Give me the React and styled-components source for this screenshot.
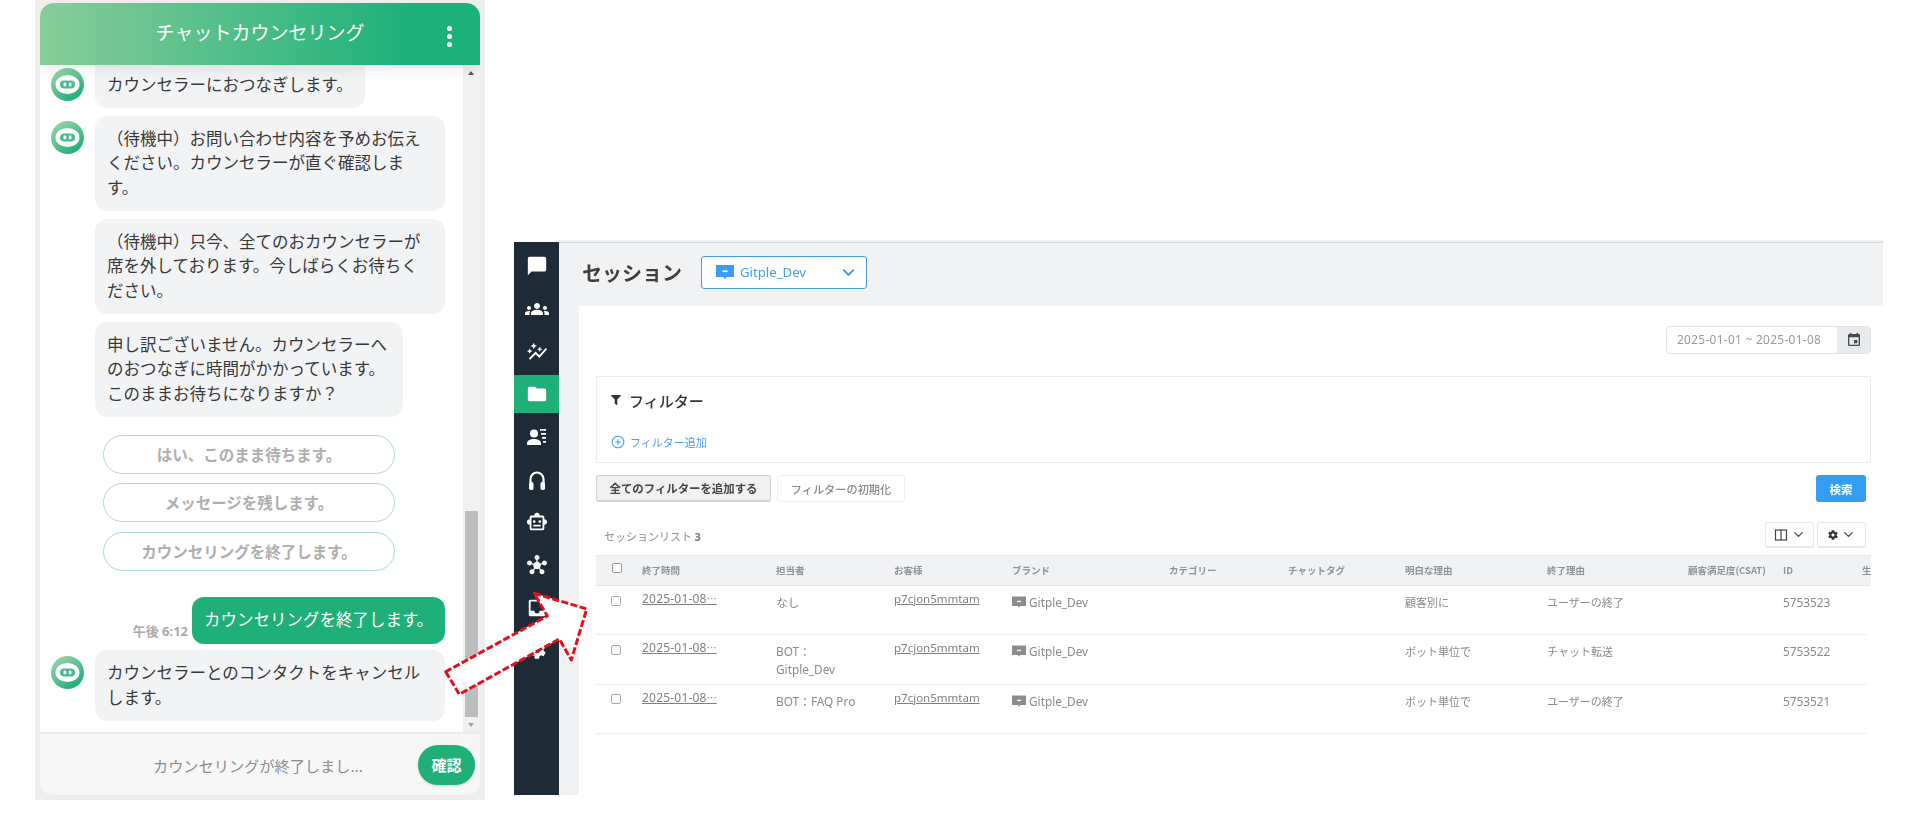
import styled, { createGlobalStyle } from "styled-components";
import { ChevronDown, CirclePlus } from "lucide-react";
import {
  MdAutoGraph,
  MdChatBubble,
  MdEvent,
  MdFolder,
  MdGroups,
  MdHub,
  MdInbox,
  MdOutlineSmartToy,
  MdSettings,
} from "react-icons/md";
import { FaCog, FaFilter } from "react-icons/fa";

const JP = `"Noto Sans CJK JP", "Noto Sans", sans-serif`;
const LATIN = `"Noto Sans", "Noto Sans CJK JP", sans-serif`;

const GlobalStyle = createGlobalStyle`
  * { box-sizing: border-box; }
  body { margin: 0; background: #fff; font-family: ${JP}; }
`;

const ContactListIcon = () => (
  <svg width="22" height="22" viewBox="0 0 22 22" fill="#fff">
    <circle cx="8" cy="7.500" r="4" />
    <path d="M1 19v-2c0-2.600 4-4 7-4s7 1.400 7 4v2z" />
    <path d="M14 3h6v1.700h-6zM15 7h5v1.700h-5zM16 11h4v1.700h-4zM17 15h3v1.700h-3z" />
  </svg>
);

const HeadsetIcon = () => (
  <svg width="24" height="24" viewBox="0 0 24 24" fill="#fff">
    <path d="M5.500 15v-4a6.500 6.500 0 0 1 13 0v4" fill="none" stroke="#fff" strokeWidth="2.200" />
    <rect x="4" y="14" width="4.500" height="8" rx="1.800" />
    <rect x="15.500" y="14" width="4.500" height="8" rx="1.800" />
  </svg>
);

const ColumnsIcon = () => (
  <svg width="14" height="14" viewBox="0 0 14 14" fill="none" stroke="#444" strokeWidth="1.200">
    <rect x="1.500" y="2" width="11" height="10" />
    <path d="M7 2v10" />
  </svg>
);

const BrandIcon = ({ color, size = 14 }) => (
  <svg width={size} height={size} viewBox="0 0 18 16">
    <path d="M0 1h18v12h-7.500L9 15.500 7.500 13H0z" fill={color} />
    <rect x="6.500" y="6.500" width="5" height="1.600" fill="#fff" />
  </svg>
);

const BotAvatar = ({ first }) => (
  <AvatarBox $first={first}>
    <svg width="33" height="33" viewBox="0 0 33 33">
      <defs>
        <linearGradient id="botGrad" x1="0" y1="0" x2="0.7" y2="1">
          <stop offset="0" stopColor="#a8d9ae" />
          <stop offset="1" stopColor="#1cae79" />
        </linearGradient>
      </defs>
      <circle cx="16.500" cy="16.500" r="16.500" fill="url(#botGrad)" />
      <ellipse cx="16.500" cy="16.500" rx="12" ry="9.500" fill="#fff" />
      <rect x="9" y="12.500" width="15" height="8" rx="4" fill="#4cbb8d" />
      <rect x="12.500" y="14.500" width="2.800" height="4" rx="1.400" fill="#fff" />
      <rect x="17.700" y="14.500" width="2.800" height="4" rx="1.400" fill="#fff" />
    </svg>
  </AvatarBox>
);

const NAV_ITEMS = [
  { icon: <MdChatBubble size={22} /> },
  { icon: <MdGroups size={24} /> },
  { icon: <MdAutoGraph size={22} /> },
  { icon: <MdFolder size={22} />, active: true },
  { icon: <ContactListIcon /> },
  { icon: <HeadsetIcon /> },
  { icon: <MdOutlineSmartToy size={22} /> },
  { icon: <MdHub size={20} /> },
  { icon: <MdInbox size={22} /> },
  { icon: <MdSettings size={22} /> },
];

const COLUMNS = [
  { label: "", width: 46 },
  { label: "終了時間", width: 134 },
  { label: "担当者", width: 118 },
  { label: "お客様", width: 118 },
  { label: "ブランド", width: 157 },
  { label: "カテゴリー", width: 119 },
  { label: "チャットタグ", width: 117 },
  { label: "明白な理由", width: 142 },
  { label: "終了理由", width: 141 },
  { label: "顧客満足度(CSAT)", width: 95 },
  { label: "ID", width: 79 },
  { label: "生", width: 120 },
];

const GRID = COLUMNS.map((c) => `${c.width}px`).join(" ");

const SESSIONS = [
  { agent: "なし", reason: "顧客別に", end: "ユーザーの終了", id: "5753523" },
  {
    agent: (
      <>
        BOT：
        <br />
        Gitple_Dev
      </>
    ),
    reason: "ボット単位で",
    end: "チャット転送",
    id: "5753522",
  },
  { agent: "BOT：FAQ Pro", reason: "ボット単位で", end: "ユーザーの終了", id: "5753521" },
];

const ChatWidget = () => (
  <S.ChatFrame>
    <S.Chat>
      <S.ChatHeader>
        <S.ChatTitle>チャットカウンセリング</S.ChatTitle>
        <S.Kebab>
          <i />
          <i />
          <i />
        </S.Kebab>
      </S.ChatHeader>
      <S.ChatBody>
        <S.Messages>
          <S.BotRow>
            <BotAvatar first />
            <S.Bubble $width={270} $clipped>
              カウンセラーにおつなぎします。
            </S.Bubble>
          </S.BotRow>
          <S.BotRow>
            <BotAvatar />
            <S.Bubble>（待機中）お問い合わせ内容を予めお伝えください。カウンセラーが直ぐ確認します。</S.Bubble>
          </S.BotRow>
          <S.BotRow $plain>
            <S.Bubble>（待機中）只今、全てのおカウンセラーが席を外しております。今しばらくお待ちください。</S.Bubble>
          </S.BotRow>
          <S.BotRow $plain>
            <S.Bubble $width={308}>申し訳ございません。カウンセラーへのおつなぎに時間がかかっています。このままお待ちになりますか？</S.Bubble>
          </S.BotRow>
          <S.Choices>
            <S.Choice>はい、このまま待ちます。</S.Choice>
            <S.Choice>メッセージを残します。</S.Choice>
            <S.Choice>カウンセリングを終了します。</S.Choice>
          </S.Choices>
          <S.UserRow>
            <S.Time>午後 6:12</S.Time>
            <S.UserBubble>カウンセリングを終了します。</S.UserBubble>
          </S.UserRow>
          <S.BotRow>
            <BotAvatar />
            <S.Bubble>カウンセラーとのコンタクトをキャンセルします。</S.Bubble>
          </S.BotRow>
        </S.Messages>
        <S.Scrollbar>
          <S.ScrollArrow $up />
          <S.ScrollSpace />
          <S.ScrollThumb />
          <S.ScrollArrow />
        </S.Scrollbar>
      </S.ChatBody>
      <S.ChatFooter>
        <S.ChatInput readOnly placeholder="カウンセリングが終了しまし..." />
        <S.ConfirmButton>確認</S.ConfirmButton>
      </S.ChatFooter>
    </S.Chat>
  </S.ChatFrame>
);

const SessionTable = () => (
  <S.Table>
    <S.TableHead>
      {COLUMNS.map((col, i) => (
        <S.HeadCell key={i}>
          {i === 0 ? <S.HeadCheck /> : <S.HeadLabel>{col.label}</S.HeadLabel>}
        </S.HeadCell>
      ))}
    </S.TableHead>
    {SESSIONS.map((row) => (
      <S.TableRow key={row.id}>
        <S.Cell>
          <S.RowCheck />
        </S.Cell>
        <S.LinkCell $spaced>
          2025-01-08<S.Dots>…</S.Dots>
        </S.LinkCell>
        <S.Cell $latin>{row.agent}</S.Cell>
        <S.LinkCell>p7cjon5mmtam</S.LinkCell>
        <S.Cell $latin>
          <S.Brand>
            <BrandIcon color="#8c8c8c" />
            Gitple_Dev
          </S.Brand>
        </S.Cell>
        <S.Cell />
        <S.Cell />
        <S.Cell>{row.reason}</S.Cell>
        <S.Cell>{row.end}</S.Cell>
        <S.Cell />
        <S.Cell $latin>{row.id}</S.Cell>
        <S.Cell />
      </S.TableRow>
    ))}
  </S.Table>
);

const SessionApp = () => (
  <S.AppFrame>
    <S.Sidebar>
      {NAV_ITEMS.map((item, i) => (
        <S.NavItem key={i} $active={item.active}>
          {item.icon}
        </S.NavItem>
      ))}
    </S.Sidebar>
    <S.Main>
      <S.PageHeader>
        <S.PageTitle>セッション</S.PageTitle>
        <S.BrandSelect>
          <BrandIcon color="#3a9cee" size={18} />
          <S.BrandName>Gitple_Dev</S.BrandName>
          <ChevronDown size={19} color="#3a8fd8" strokeWidth={2.2} />
        </S.BrandSelect>
      </S.PageHeader>
      <S.Card>
        <S.DateRow>
          <S.DateRange>
            <S.DateText>2025-01-01 ~ 2025-01-08</S.DateText>
            <S.DateAddon>
              <MdEvent size={16} color="#444c55" />
            </S.DateAddon>
          </S.DateRange>
        </S.DateRow>
        <S.FilterBox>
          <S.FilterTitle>
            <FaFilter size={10} color="#333" />
            フィルター
          </S.FilterTitle>
          <S.FilterAdd>
            <CirclePlus size={14} color="#3a9cee" strokeWidth={1.8} />
            フィルター追加
          </S.FilterAdd>
        </S.FilterBox>
        <S.ActionRow>
          <S.AddAllButton>全てのフィルターを追加する</S.AddAllButton>
          <S.ResetButton>フィルターの初期化</S.ResetButton>
          <S.SearchButton>検索</S.SearchButton>
        </S.ActionRow>
        <S.ListRow>
          <S.ListTitle>
            セッションリスト <b>3</b>
          </S.ListTitle>
          <S.ToolGroup>
            <S.ToolButton>
              <ColumnsIcon />
              <ChevronDown size={15} color="#444" strokeWidth={2} />
            </S.ToolButton>
            <S.ToolButton>
              <FaCog size={10} color="#333" />
              <ChevronDown size={15} color="#444" strokeWidth={2} />
            </S.ToolButton>
          </S.ToolGroup>
        </S.ListRow>
        <SessionTable />
      </S.Card>
    </S.Main>
  </S.AppFrame>
);

const App = () => (
  <>
    <GlobalStyle />
    <S.Page>
      <ChatWidget />
      <SessionApp />
      <S.Arrow width="150" height="110" viewBox="0 0 150 110">
        <polygon
          points="5.700,86.700 19.300,109.300 119.300,54 131.300,75 146.700,24 94.300,8.300 107.300,31"
          fill="#fff"
          stroke="#e3101a"
          strokeWidth="3"
          strokeDasharray="7 2.500"
          strokeLinejoin="round"
        />
      </S.Arrow>
    </S.Page>
  </>
);

export default App;

const AvatarBox = styled.div`
  flex: none;
  width: 33px;
  height: 33px;
  margin-top: ${({ $first }) => ($first ? "3px" : "5.500px")};
`;

const S = {
  Page: styled.div`
    position: relative;
    display: flex;
    align-items: flex-start;
    width: 1920px;
    height: 814px;
    padding-left: 35px;
    overflow: hidden;
    background: #fff;
  `,
  Arrow: styled.svg`
    position: absolute;
    left: 440px;
    top: 585px;
  `,

  ChatFrame: styled.div`
    flex: none;
    width: 450px;
    height: 800px;
    padding: 3px 5px 5px;
    background: #eeeeee;
  `,
  Chat: styled.div`
    display: flex;
    flex-direction: column;
    height: 100%;
    border-radius: 14px;
    overflow: hidden;
    background: #fff;
  `,
  ChatHeader: styled.div`
    position: relative;
    z-index: 1;
    flex: none;
    display: flex;
    align-items: center;
    justify-content: center;
    height: 62px;
    background: linear-gradient(90deg, #88cd98 0%, #1cb07a 85%);
    box-shadow: 0 5px 12px rgba(0, 0, 0, 0.08);
  `,
  ChatTitle: styled.div`
    margin-top: -6px;
    font-size: 19px;
    color: #fff;
  `,
  Kebab: styled.div`
    position: absolute;
    right: 28px;
    top: 23px;
    display: flex;
    flex-direction: column;
    gap: 3px;
    i {
      width: 5px;
      height: 5px;
      border-radius: 50%;
      background: #fff;
    }
  `,
  ChatBody: styled.div`
    flex: 1;
    display: flex;
    min-height: 0;
  `,
  Messages: styled.div`
    flex: 1;
    display: flex;
    flex-direction: column;
    gap: 7.500px;
    min-width: 0;
  `,
  BotRow: styled.div`
    display: flex;
    gap: 11px;
    padding-left: ${({ $plain }) => ($plain ? "55px" : "11px")};
  `,
  Bubble: styled.div`
    width: ${({ $width }) => $width || 350}px;
    padding: 10px 12px 12px;
    border-radius: ${({ $clipped }) => ($clipped ? "0 0 12px 12px" : "12px")};
    background: #f2f3f5;
    font-size: 16.500px;
    line-height: 24.500px;
    color: #383838;
    ${({ $clipped }) => $clipped && "height: 43px; padding-top: 6.500px;"}
  `,
  Choices: styled.div`
    display: flex;
    flex-direction: column;
    gap: 9.500px;
    width: 292px;
    margin: 10px 0 19px 63px;
  `,
  Choice: styled.div`
    height: 39px;
    border: 1px solid #a9dcc8;
    border-radius: 20px;
    font-size: 15.500px;
    font-weight: 700;
    line-height: 37px;
    text-align: center;
    color: #aeaeae;
  `,
  UserRow: styled.div`
    display: flex;
    align-items: flex-end;
    justify-content: flex-end;
    gap: 4px;
    margin-bottom: -1.500px;
    padding-right: 18px;
  `,
  Time: styled.div`
    padding-bottom: 4px;
    font-family: ${LATIN};
    font-size: 13px;
    font-weight: 700;
    color: #aaa;
  `,
  UserBubble: styled.div`
    width: 253px;
    height: 47px;
    padding-left: 12px;
    border-radius: 12px;
    background: #1fb07a;
    font-size: 16.500px;
    line-height: 45px;
    white-space: nowrap;
    color: #fff;
  `,
  Scrollbar: styled.div`
    flex: none;
    display: flex;
    flex-direction: column;
    width: 17px;
    background: #f1f1f1;
  `,
  ScrollArrow: styled.div`
    flex: none;
    height: ${({ $up }) => ($up ? "18px" : "15px")};
    position: relative;
    &::after {
      content: "";
      position: absolute;
      left: 5px;
      top: 6px;
      border-left: 3.500px solid transparent;
      border-right: 3.500px solid transparent;
      ${({ $up }) =>
        $up ? "border-bottom: 4px solid #555;" : "border-top: 4px solid #a3a3a3;"}
    }
  `,
  ScrollSpace: styled.div`
    flex: 1;
  `,
  ScrollThumb: styled.div`
    flex: none;
    height: 206px;
    margin: 0 2px;
    background: #bdbdbd;
  `,
  ChatFooter: styled.div`
    flex: none;
    display: flex;
    align-items: center;
    height: 63px;
    padding-right: 5px;
    border-top: 2px solid #ececec;
    background: #f7f7f7;
  `,
  ChatInput: styled.input`
    flex: 1;
    min-width: 0;
    height: 40px;
    padding: 0 8px 0 66px;
    border: 0;
    outline: 0;
    background: transparent;
    font-family: ${JP};
    font-size: 15.200px;
    text-align: center;
    &::placeholder {
      color: #8c8c8c;
      opacity: 1;
    }
  `,
  ConfirmButton: styled.button`
    flex: none;
    width: 57px;
    height: 40px;
    padding: 0;
    border: 0;
    border-radius: 20px;
    background: #1fb07a;
    box-shadow: 0 1px 3px rgba(0, 0, 0, 0.15);
    font-family: ${JP};
    font-size: 15px;
    font-weight: 700;
    color: #fff;
  `,

  AppFrame: styled.div`
    flex: none;
    display: flex;
    width: 1369px;
    height: 553px;
    margin: 242px 0 0 29px;
    filter: blur(0.35px);
  `,
  Sidebar: styled.div`
    flex: none;
    display: flex;
    flex-direction: column;
    gap: 4.300px;
    width: 45px;
    padding-top: 5px;
    overflow: hidden;
    background: #1e2a36;
  `,
  NavItem: styled.div`
    flex: none;
    display: flex;
    align-items: center;
    justify-content: center;
    height: 38.400px;
    color: #fff;
    background: ${({ $active }) => ($active ? "#1fb07a" : "transparent")};
  `,
  Main: styled.div`
    flex: 1;
    display: flex;
    flex-direction: column;
    min-width: 0;
    padding-left: 20px;
    border-top: 1px solid #d6d7d9;
    background: #f1f2f4;
    box-shadow: 0 -2px 0 #f0f1f2;
  `,
  PageHeader: styled.div`
    flex: none;
    display: flex;
    align-items: center;
    gap: 19px;
    height: 63px;
    padding-left: 3px;
    padding-bottom: 5px;
  `,
  PageTitle: styled.h1`
    margin: 0;
    font-size: 20px;
    font-weight: 700;
    color: #3f3f3f;
  `,
  BrandSelect: styled.div`
    display: flex;
    align-items: center;
    width: 166px;
    height: 33px;
    padding: 0 8px 0 14px;
    border: 1px solid #4a9ae0;
    border-radius: 3px;
    background: #fff;
  `,
  BrandName: styled.span`
    flex: 1;
    margin-left: 6px;
    font-family: ${LATIN};
    font-size: 13.200px;
    color: #4a9de8;
  `,
  Card: styled.div`
    flex: 1;
    min-height: 0;
    padding: 20px 12px 0 17px;
    overflow: hidden;
    background: #fff;
  `,
  DateRow: styled.div`
    display: flex;
    justify-content: flex-end;
  `,
  DateRange: styled.div`
    display: flex;
    width: 205px;
    height: 28px;
    border: 1px solid #e0e2e5;
    border-radius: 4px;
    overflow: hidden;
  `,
  DateText: styled.div`
    flex: 1;
    padding-left: 10px;
    font-family: ${LATIN};
    font-size: 11.800px;
    letter-spacing: 0.35px;
    line-height: 25px;
    color: #999;
  `,
  DateAddon: styled.div`
    flex: none;
    display: flex;
    align-items: center;
    justify-content: center;
    width: 33px;
    background: #e9eaec;
  `,
  FilterBox: styled.div`
    height: 87px;
    margin-top: 22px;
    padding: 13px 14px 0;
    border: 1px solid #ececec;
  `,
  FilterTitle: styled.div`
    display: flex;
    align-items: center;
    gap: 8px;
    height: 20px;
    font-size: 15px;
    font-weight: 500;
    color: #333;
  `,
  FilterAdd: styled.div`
    display: flex;
    align-items: center;
    gap: 5px;
    height: 16px;
    margin-top: 24px;
    font-size: 11px;
    color: #4a9de8;
  `,
  ActionRow: styled.div`
    display: flex;
    gap: 6px;
    margin-top: 12px;
    padding-right: 5px;
  `,
  AddAllButton: styled.button`
    width: 175px;
    height: 27px;
    padding: 0;
    border: 1px solid #cfd1d4;
    border-bottom-width: 2px;
    border-radius: 3px;
    background: #f0f1f3;
    font-family: ${JP};
    font-size: 11.400px;
    font-weight: 700;
    color: #444;
  `,
  ResetButton: styled.button`
    width: 128px;
    height: 27px;
    padding: 0;
    border: 1px solid #eeeeee;
    border-radius: 3px;
    background: #fff;
    font-family: ${JP};
    font-size: 11.200px;
    font-weight: 500;
    color: #8a8a8a;
  `,
  SearchButton: styled.button`
    width: 50px;
    height: 27px;
    margin-left: auto;
    padding: 0;
    border: 0;
    border-radius: 3px;
    background: #339ef0;
    font-family: ${JP};
    font-size: 11.500px;
    font-weight: 700;
    color: #fff;
  `,
  ListRow: styled.div`
    display: flex;
    align-items: center;
    justify-content: space-between;
    height: 26px;
    margin-top: 20px;
    padding: 0 5px 0 8px;
  `,
  ListTitle: styled.div`
    margin-top: 2px;
    font-size: 11px;
    color: #8c8c8c;
    b {
      font-family: ${LATIN};
      color: #777;
    }
  `,
  ToolGroup: styled.div`
    display: flex;
    gap: 3px;
  `,
  ToolButton: styled.button`
    display: flex;
    align-items: center;
    justify-content: center;
    gap: 3px;
    width: 49px;
    height: 26px;
    padding: 0;
    border: 1px solid #e6e7e9;
    border-bottom-width: 2px;
    border-radius: 3px;
    background: #fff;
  `,
  Table: styled.div`
    margin-top: 7px;
    overflow: hidden;
  `,
  TableHead: styled.div`
    display: grid;
    grid-template-columns: ${GRID};
    height: 31px;
    background: #f1f2f4;
    border-top: 1px solid #e8e9eb;
    border-bottom: 1px solid #e6e7e9;
  `,
  HeadCell: styled.div`
    display: flex;
    align-items: center;
    min-width: 0;
    overflow: hidden;
  `,
  HeadLabel: styled.span`
    display: block;
    max-width: calc(100% - 16px);
    margin-top: -2px;
    overflow: hidden;
    white-space: nowrap;
    font-size: 9.500px;
    font-weight: 700;
    color: #8f9297;
  `,
  HeadCheck: styled.span`
    width: 10px;
    height: 10px;
    margin: -5px 0 0 16px;
    border: 1px solid #9a9a9a;
    border-radius: 2px;
    background: #fff;
  `,
  TableRow: styled.div`
    display: grid;
    grid-template-columns: ${GRID};
    width: 1271px;
    height: 49.400px;
    border-bottom: 1px solid #eeeeee;
  `,
  Cell: styled.div`
    min-width: 0;
    padding-top: 7px;
    font-family: ${({ $latin }) => ($latin ? LATIN : JP)};
    font-size: ${({ $latin }) => ($latin ? "11.800px" : "11px")};
    line-height: 18px;
    color: #8a8a8a;
    white-space: nowrap;
  `,
  LinkCell: styled.div`
    min-width: 0;
    padding-top: 4px;
    font-family: ${LATIN};
    font-size: ${({ $spaced }) => ($spaced ? "12px" : "11.500px")};
    letter-spacing: ${({ $spaced }) => ($spaced ? "0.2px" : "0")};
    line-height: 18px;
    color: #808080;
    text-decoration: underline;
    white-space: nowrap;
  `,
  Dots: styled.span`
    font-family: ${JP};
    font-size: 10px;
  `,
  RowCheck: styled.span`
    display: block;
    width: 10px;
    height: 10px;
    margin: 2.500px 0 0 15px;
    border: 1px solid #aaa;
    border-radius: 2px;
  `,
  Brand: styled.span`
    display: inline-flex;
    align-items: center;
    gap: 3px;
  `,
};
